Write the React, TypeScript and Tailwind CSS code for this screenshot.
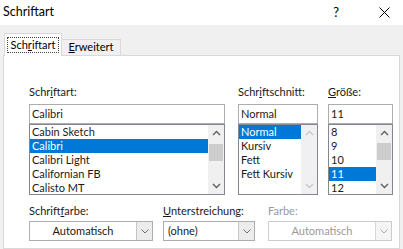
import React from 'react';

const font = { fontFamily: 'Lato, "Noto Sans", sans-serif' };

function Chevron({ dir, disabled }: { dir: 'up' | 'down'; disabled?: boolean }) {
  return (
    <svg width="9" height="6" viewBox="0 0 9 6" className="block">
      <path
        d={dir === 'up' ? 'M1 5 L4.5 1.5 L8 5' : 'M1 1 L4.5 4.5 L8 1'}
        fill="none"
        stroke={disabled ? '#c8c8c8' : '#606060'}
        strokeWidth="1.4"
      />
    </svg>
  );
}

function ScrollBar({ disabled, thumbTop }: { disabled?: boolean; thumbTop?: number }) {
  return (
    <div className="w-[16px] h-full bg-[#f0f0f0] flex flex-col items-center justify-between py-[5px] relative">
      <Chevron dir="up" disabled={disabled} />
      {!disabled && (
        <div
          className="absolute left-[1px] right-[1px] h-[17px] bg-[#cdcdcd]"
          style={{ top: thumbTop }}
        />
      )}
      <Chevron dir="down" disabled={disabled} />
    </div>
  );
}

function ListBox({
  items,
  selected,
  scrollDisabled,
  thumbTop,
}: {
  items: string[];
  selected: string;
  scrollDisabled?: boolean;
  thumbTop?: number;
}) {
  return (
    <div className="h-[71px] border border-[#828790] bg-white flex overflow-hidden">
      <div className="flex-1 flex flex-col">
        {items.map((it) => (
          <div
            key={it}
            className={`h-[14px] leading-[14px] pl-[2px] shrink-0 ${
              it === selected ? 'bg-[#0078d7] text-white' : 'text-[#1a1a1a]'
            }`}
          >
            {it}
          </div>
        ))}
      </div>
      <ScrollBar disabled={scrollDisabled} thumbTop={thumbTop} />
    </div>
  );
}

function Combo({ value, disabled, center }: { value: string; disabled?: boolean; center?: boolean }) {
  return (
    <div
      className={`h-[20px] flex border ${disabled ? 'border-[#cccccc]' : 'border-[#adadad]'} bg-white`}
    >
      <div
        className={`flex-1 leading-[18px] px-[4px] ${center ? 'text-center' : ''} ${
          disabled ? 'text-[#9a9a9a]' : 'text-[#1a1a1a]'
        }`}
      >
        {value}
      </div>
      <div
        className={`w-[16px] flex items-center justify-center border-l ${
          disabled ? 'border-[#d8d8d8] bg-[#f5f5f5]' : 'border-[#c6c6c6] bg-[#ececec]'
        }`}
      >
        <svg width="8" height="5" viewBox="0 0 8 5">
          <path d="M0.5 0.5 L4 4 L7.5 0.5" fill="none" stroke={disabled ? '#a8a8a8' : '#707070'} strokeWidth="1" />
        </svg>
      </div>
    </div>
  );
}

export default function App() {
  return (
    <div className="w-[403px] h-[249px] bg-[#f0f0f0] flex flex-col overflow-hidden text-[11px]" style={font}>
      {/* Title bar */}
      <div className="h-[25px] bg-white flex items-center shrink-0">
        <span className="pl-[3px] text-[12.5px] text-black">Schriftart</span>
        <span className="ml-auto text-[13px] text-black mr-[40px]">?</span>
        <svg width="11" height="11" viewBox="0 0 11 11" className="mr-[13px]">
          <path d="M0.5 0.5 L10.5 10.5 M10.5 0.5 L0.5 10.5" stroke="#000" strokeWidth="1" />
        </svg>
      </div>

      {/* Tabs */}
      <div className="flex items-end pl-[4px] mt-[8px] h-[22px] shrink-0 relative z-10">
        <div className="h-[23px] w-[58px] bg-white border border-b-0 border-[#d9d9d9] flex items-center justify-center -mb-px">
          <span className="border border-dotted border-[#444] px-[3px] leading-[14px] text-black">
            Sch<u>r</u>iftart
          </span>
        </div>
        <div className="h-[16px] w-[59px] border border-l-0 border-b-0 border-[#d9d9d9] flex items-center justify-center text-black">
          <span>
            <u>E</u>rweitert
          </span>
        </div>
      </div>

      {/* Panel */}
      <div className="flex-1 mx-[3px] border border-[#d9d9d9] bg-white pl-[25px] pr-[6px] pt-[28px]">
        <div className="flex gap-[13px]">
          <div className="w-[196px] flex flex-col">
            <div className="h-[20px] leading-[16px] text-[#1a1a1a]">
              Schr<u>i</u>ftart:
            </div>
            <div className="h-[20px] border border-[#adadad] leading-[18px] px-[2px] text-[#1a1a1a]">Calibri</div>
            <ListBox
              items={['Cabin Sketch', 'Calibri', 'Calibri Light', 'Californian FB', 'Calisto MT']}
              selected="Calibri"
              thumbTop={19}
            />
          </div>
          <div className="w-[80px] flex flex-col">
            <div className="h-[20px] leading-[16px] text-[#1a1a1a]">
              Schr<u>i</u>ftschnitt:
            </div>
            <div className="h-[20px] border border-[#adadad] leading-[18px] px-[2px] text-[#1a1a1a]">Normal</div>
            <ListBox items={['Normal', 'Kursiv', 'Fett', 'Fett Kursiv']} selected="Normal" scrollDisabled />
          </div>
          <div className="w-[65px] flex flex-col ml-[-3px]">
            <div className="h-[20px] leading-[16px] text-[#1a1a1a]">
              <u>G</u>röße:
            </div>
            <div className="h-[20px] border border-[#adadad] leading-[18px] px-[2px] text-[#1a1a1a]">11</div>
            <ListBox items={['8', '9', '10', '11', '12']} selected="11" thumbTop={18} />
          </div>
        </div>

        <div className="flex mt-[8px]">
          <div className="w-[124px] flex flex-col">
            <div className="h-[18px] leading-[16px] text-[#1a1a1a]">
              Schrift<u>f</u>arbe:
            </div>
            <Combo value="Automatisch" center />
          </div>
          <div className="w-[92px] flex flex-col ml-[10px]">
            <div className="h-[18px] leading-[16px] text-[#1a1a1a]">
              <u>U</u>nterstreichung:
            </div>
            <Combo value="(ohne)" />
          </div>
          <div className="w-[124px] flex flex-col ml-[13px]">
            <div className="h-[18px] leading-[16px] text-[#9a9a9a]">Farbe:</div>
            <Combo value="Automatisch" disabled center />
          </div>
        </div>
      </div>
    </div>
  );
}
